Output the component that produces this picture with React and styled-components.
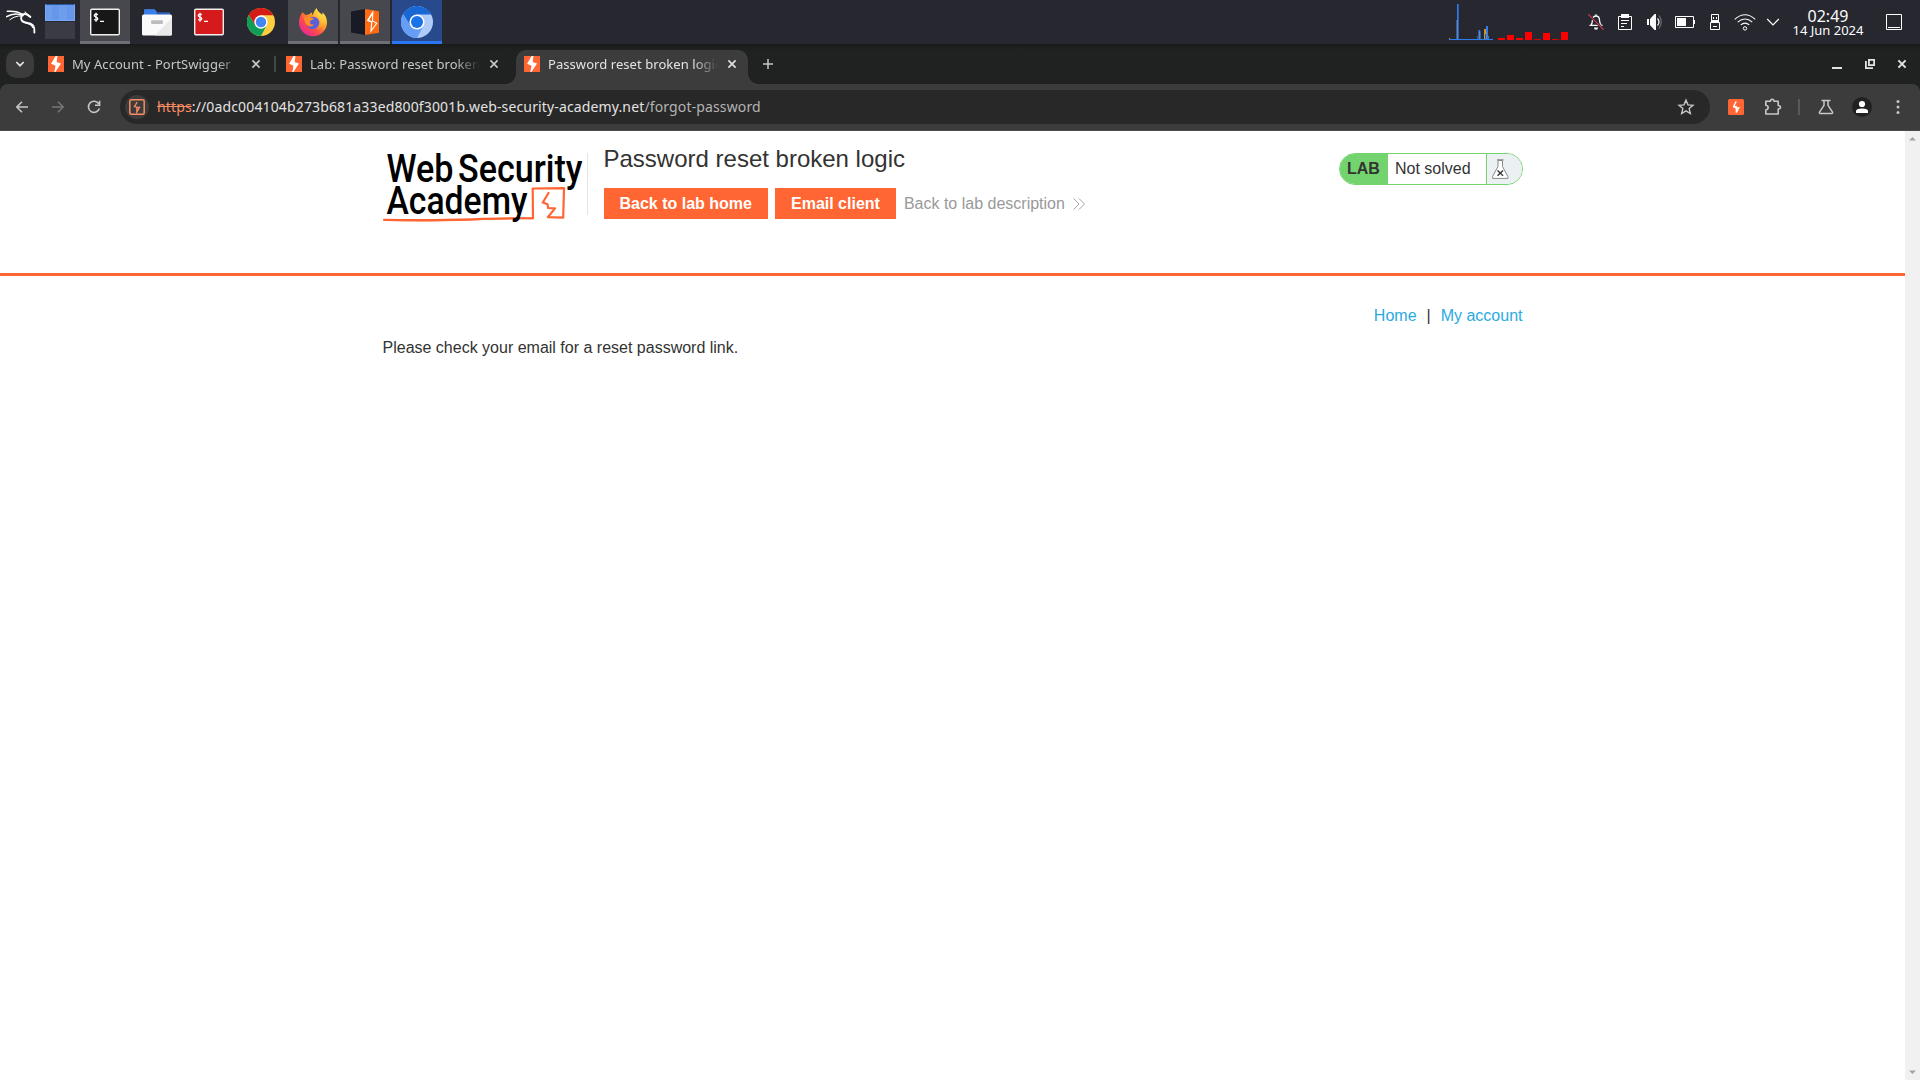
import React from "react";
import styled, { createGlobalStyle, css } from "styled-components";

const Global = createGlobalStyle`
  * { box-sizing: border-box; }
  html, body { margin: 0; padding: 0; }
  body { width: 1920px; height: 1080px; overflow: hidden; background: #fff; }
  svg { display: block; flex: none; }
`;

const ui = css`font-family: "Noto Sans", sans-serif;`;
const orange = "#ff6633";

const Screen = styled.div`
  display: flex;
  flex-direction: column;
  width: 1920px;
  height: 1080px;
  overflow: hidden;
`;

/* ---------- desktop panel ---------- */
const Panel = styled.header`
  ${ui}
  display: flex;
  flex: none;
  height: 44px;
  background: #272730;
  color: #fcfcfc;
`;
const Menu = styled.div`
  width: 45px;
  padding: 9px 0 0 6px;
`;
const Pager = styled.div`
  display: grid;
  grid-template-rows: 17px 17px;
  gap: 1px;
  width: 30px;
  margin: 4px 5px 0 0;
`;
const Desk = styled.div`
  background: ${(p) => (p.$on ? "linear-gradient(90deg, #6d9eee 0 6px, #6797ea 6px 13px, #6d9eee 13px 21px, #6797ea 21px)" : "#3b3b45")};
  border: ${(p) => (p.$on ? "1px solid #77aaff" : "0")};
  border-top-color: #265a9f;
`;
const Tasks = styled.div`
  display: flex;
  gap: 2px;
`;
const Task = styled.div`
  display: flex;
  justify-content: center;
  align-items: center;
  width: 50px;
  height: 44px;
  background: ${(p) => (p.$state === "active" ? "#284a8c" : p.$state === "open" ? "#47484d" : "transparent")};
  box-shadow: ${(p) => (p.$state === "active" ? "inset 0 -3px #2977f2" : p.$state === "open" ? "inset 0 -3px #6d7077" : "none")};
`;
const Monitor = styled.div`
  margin-left: auto;
  width: 139px;
  height: 44px;
`;
const Tray = styled.div`
  display: flex;
  align-items: center;
  height: 44px;
`;
const TrayItem = styled.div`
  display: flex;
  justify-content: center;
  width: ${(p) => p.$w}px;
`;
const Clock = styled.div`
  width: 88px;
  padding-top: 7px;
  height: 44px;
  text-align: center;
`;
const Time = styled.div`
  font-size: 16px;
  line-height: 18px;
`;
const DateText = styled.div`
  font-size: 13px;
  line-height: 11px;
  white-space: nowrap;
`;

/* ---------- browser ---------- */
const TabStrip = styled.div`
  ${ui}
  display: flex;
  flex: none;
  height: 40px;
  padding: 6px 0 0 6px;
  background: linear-gradient(#191a1a, #202221 6px);
  color: #c7c9c8;
`;
const TabSearch = styled.div`
  display: grid;
  place-items: center;
  width: 28px;
  height: 28px;
  margin-right: 6px;
  border-radius: 10px;
  background: #3c3c3c;
`;
const Tab = styled.div`
  position: relative;
  display: flex;
  align-items: center;
  width: ${(p) => p.$w}px;
  height: 34px;
  padding: 0 10px 6px 8px;
  border-radius: 10px 10px 0 0;
  background: ${(p) => (p.$active ? "#3c3c3c" : "transparent")};
  color: ${(p) => (p.$active ? "#e3e3e3" : "#c7c7c7")};
  ${(p) => p.$active && css`
    &::before, &::after {
      content: "";
      position: absolute;
      bottom: 0;
      width: 10px;
      height: 10px;
    }
    &::before { left: -10px; background: radial-gradient(circle at 0 0, transparent 9.5px, #3c3c3c 10px); }
    &::after { right: -10px; background: radial-gradient(circle at 100% 0, transparent 9.5px, #3c3c3c 10px); }
  `}
`;
const TabTitle = styled.span`
  flex: none;
  width: 170px;
  margin: 0 9px 0 8px;
  overflow: hidden;
  white-space: nowrap;
  font-size: 13px;
  letter-spacing: 0.06px;
  line-height: 20px;
  mask-image: linear-gradient(90deg, #000 145px, transparent 170px);
`;
const TabRule = styled.div`
  width: 2px;
  height: 16px;
  margin: 6px 2px 0 0;
  background: #454746;
`;
const NewTab = styled.div`
  padding: 9px 0 0 15px;
`;
const WindowControls = styled.div`
  display: flex;
  gap: 22.5px;
  margin-left: auto;
  padding: 9px 13px 0 0;
`;
const ToolbarBack = styled.div`
  flex: none;
  background: #202221;
`;
const Toolbar = styled.div`
  ${ui}
  display: flex;
  align-items: center;
  height: 47px;
  padding: 0 12px 1px;
  border-radius: 8px 8px 0 0;
  border-bottom: 1px solid #4b4b4b;
  background: #3c3c3c;
`;
const NavButtons = styled.div`
  display: flex;
  gap: 16px;
  width: 108px;
`;
const Omnibox = styled.div`
  display: flex;
  align-items: center;
  width: 1590px;
  height: 34px;
  padding: 0 14px 0 5px;
  border-radius: 17px;
  background: #282828;
`;
const SiteChip = styled.div`
  display: grid;
  place-items: center;
  width: 24px;
  height: 24px;
  margin-right: 8px;
  border-radius: 50%;
  background: #3c3c3c;
`;
const Url = styled.span`
  flex: 1;
  font-size: 14px;
  letter-spacing: 0.138px;
  color: #e3e3e3;
  white-space: nowrap;
`;
const Scheme = styled.span`
  color: #fa8b62;
  text-decoration: line-through;
`;
const Path = styled.span`
  color: #b4b4b4;
`;
const Extensions = styled.div`
  display: flex;
  align-items: center;
  padding-left: 18px;
`;
const Puzzle = styled.svg`
  margin-left: 20px;
`;
const ExtRule = styled.div`
  width: 2px;
  height: 16px;
  margin: 0 18px 0 16px;
  background: #5a5a5a;
`;
const Avatar = styled.div`
  display: grid;
  place-items: center;
  width: 20px;
  height: 20px;
  margin: 0 24px 0 18px;
  border-radius: 50%;
  background: #202221;
`;

/* ---------- page ---------- */
const Viewport = styled.main`
  display: flex;
  flex: 1;
  font-family: "Liberation Sans", Arial, sans-serif;
  font-size: 16px;
  color: #333332;
  background: #fff;
`;
const Document = styled.div`
  flex: 1;
`;
const Scrollbar = styled.div`
  display: flex;
  flex-direction: column;
  justify-content: space-between;
  width: 15px;
  padding: 5px 4px;
  background: #f1f1f1;
`;
const LabHeader = styled.section`
  height: 145px;
  border-bottom: 3px solid ${orange};
`;
const Container = styled.div`
  display: flex;
  width: 1140px;
  margin: 0 auto;
`;
const LogoBox = styled.div`
  width: 205px;
  height: 62px;
  margin: 22px 16px 0 0;
  border-right: 1px solid #e3e3e3;
`;
const TitleBlock = styled.div`
  flex: 1;
  padding-top: 14px;
`;
const Title = styled.h2`
  margin: 0;
  font-size: 24px;
  font-weight: 400;
  line-height: 28px;
`;
const Actions = styled.div`
  display: flex;
  align-items: center;
  margin-top: 15px;
`;
const Button = styled.a`
  height: 31px;
  margin-right: 7px;
  padding: 0 16px;
  background: ${orange};
  color: #fff;
  font-weight: 700;
  line-height: 31px;
`;
const BackLink = styled.a`
  display: flex;
  align-items: center;
  gap: 8px;
  margin-left: 1px;
  color: #999;
  line-height: 31px;
`;
const Status = styled.div`
  display: flex;
  width: 184px;
  height: 32px;
  margin-top: 22px;
  overflow: hidden;
  border: 1px solid #73d46f;
  border-radius: 16px;
  line-height: 30px;
`;
const StatusLab = styled.span`
  width: 48px;
  padding-left: 7.5px;
  background: #73d46f;
  font-weight: 700;
`;
const StatusText = styled.span`
  width: 99px;
  padding-left: 7.5px;
  border-right: 1px solid #73d46f;
`;
const StatusIcon = styled.span`
  flex: 1;
  padding: 5px 0 0 5px;
  background: #ebf0f3;
`;
const SiteNav = styled.nav`
  display: flex;
  justify-content: flex-end;
  gap: 10px;
  width: 1140px;
  margin: 31px auto 0;
  line-height: 18px;
`;
const NavLink = styled.a`
  color: #29abe2;
`;
const Message = styled.p`
  width: 1140px;
  margin: 14px auto 0;
  line-height: 18px;
`;

/* ---------- drawings ---------- */
const Bolt = ({ rounded }) => (
  <svg width="16" height="16" viewBox="0 0 16 16">
    <rect width="16" height="16" rx={rounded ? 1.5 : 0} fill={orange} />
    {rounded ? (
      <path d="M8.2 2.4 5.7 7.1 8.4 7.8V9h2.4L8.3 13.6V9.1L5.2 7.7" stroke="#fff" strokeWidth="1.3" fill="none" />
    ) : (
      <path d="M7.600 0H9.400L8.700 5.900 13 7.400 7.400 16H6.300L7.500 9.700 3.100 7.800Z" fill="#fff" />
    )}
  </svg>
);

const Cross = ({ c = "#c7c7c7", w = 1.6 }) => (
  <svg width="10" height="10" viewBox="0 0 10 10"><path d="m1.4 1.4 7.2 7.2m0-7.2-7.2 7.2" stroke={c} strokeWidth={w} /></svg>
);

const Kali = () => (
  <svg width="30" height="25" viewBox="0 0 30 25" fill="none" stroke="#fff" strokeLinecap="round">
    <path d="M1.300 2.300C6 2 12 2.300 16.500 5.500" strokeWidth="1.500" />
    <path d="M.6 7.600C5 5 11 4 17 6.500" strokeWidth="1.600" />
    <path d="M3.800 10.800C6.600 8.500 10.600 6.700 16 6.800" strokeWidth="1" />
    <path d="M15.900 6.500c-1.500 2.500-.9 5.500 1.900 6.500 3.800 1.400 7.600 1 9.500 3.800.9 1.400 1.300 3.500 1.100 6.700" strokeWidth="1.900" />
    <path d="M20 14.200c4 .3 5.700 1.800 6.800 4.400" strokeWidth="1.200" />
    <path d="M15.600 5.700c2.600-1 4.400-.9 5.700 0l3 2.200" strokeWidth="2.100" />
    <path d="m21 5.200-2-2.200" strokeWidth="1.100" />
  </svg>
);

const Terminal = ({ bg }) => (
  <svg width="30" height="28" viewBox="0 0 30 28">
    <rect x=".7" y="1.2" width="28.6" height="25.6" rx="1.3" fill={bg} stroke="#f1eeee" strokeWidth="1.4" />
    <path d="M7.800 6.700C6 5.500 4.300 6 4.300 7.500c0 2 3.500 1.200 3.500 3.200 0 1.600-2 1.900-3.700.8M6 4.800v9M10 13.300h4" stroke="#fff" strokeWidth="1.300" fill="none" />
  </svg>
);

const Files = () => (
  <svg width="30" height="28" viewBox="0 0 30 28">
    <path d="M2 2.5Q2 1.2 3.3 1.2H12.500L15 4.200H27Q28.300 4.200 28.300 5.500V10H2Z" fill="#2b5fb8" />
    <path d="M2 2.5Q2 1.2 3.3 1.2H12.500L14.500 3.600V8H2Z" fill="#3b7de8" />
    <rect y="6.600" width="30" height="21" rx="1.500" fill="#fafafa" />
    <path d="M30 10 12.800 27.600H28.500q1.500 0 1.500-1.500Z" fill="#e9e9e9" />
    <rect x="9" y="12.300" width="12" height="3.600" rx="1.200" fill="#bdbdbd" />
  </svg>
);

const Chrome = ({ size, a, b, c, core }) => (
  <svg width={size} height={size} viewBox="0 0 48 48">
    <circle cx="24" cy="24" r="24" fill={c} />
    <path d="M3.200 12A24 24 0 0 0 24 48L33.600 29.500 24 24 14.400 29.500Z" fill={b} />
    <path d="M24 12.600H45.100L44.800 12A24 24 0 0 0 3.200 12L14.400 29.500Z" fill={a} />
    <circle cx="24" cy="24" r="11.400" fill="#fff" />
    <circle cx="24" cy="24" r="9" fill={core} />
  </svg>
);

const Firefox = () => (
  <svg width="30" height="30" viewBox="0 0 30 30">
    <defs>
      <linearGradient id="fxa" x1=".85" y1=".1" x2=".15" y2=".9">
        <stop offset="0" stopColor="#fff04f" /><stop offset=".35" stopColor="#ffa12b" />
        <stop offset=".65" stopColor="#ff4b45" /><stop offset="1" stopColor="#e6289a" />
      </linearGradient>
      <linearGradient id="fxb" x1="1" y1="0" x2=".4" y2="1">
        <stop offset="0" stopColor="#ffe84a" /><stop offset="1" stopColor="#ff9e2e" stopOpacity=".2" />
      </linearGradient>
    </defs>
    <path d="M4.500 5.200 7.500 8q1.800-.8 3.600-.5 1.200-1.500 3-2l-.3 3.200C16 6.200 16 3 18.800 1c.2 3.400 4 5 5.400 7l.3-2.600C27.500 8 29 11.500 29 15.500A14 13.700 0 0 1 1 15.500C1 11.500 2.300 8 4.500 5.200Z" fill="url(#fxa)" />
    <circle cx="15" cy="16" r="6.300" fill="#5b5fd8" />
    <path d="M14.500 9.800c5-1.800 8.600 2 7 6.700-1 3.200-4 5-7 4.600 5 3 10.700 0 11.200-6 .4-4-1.600-7.200-6.200-9.600Z" fill="url(#fxb)" />
    <path d="M5.500 10.500c2-1 5-1.500 6.200-.6 1 .8 2.700 1 4 1.200-.4 2-3 2-3.700 3.300-.5 2 1.500 3.600 4 3-1 2-4 2.500-6 1.400-2-1-3.500-4-4.500-8.300Z" fill="#ff8a2b" />
  </svg>
);

const Burp = () => (
  <svg width="30" height="28" viewBox="0 0 30 28">
    <path d="M1 3.500 15 1V27L1 24.500Z" fill="#181b25" />
    <path d="M15 1 29 3.200V24.800L15 27Z" fill="#ff6a13" />
    <path d="M22.800 4.300 17.700 12.500 21.800 14 21 23 26.700 15.200 22.500 13Z" stroke="#fff" strokeWidth="1.100" fill="none" />
    <path d="M22.600 5 18 12.400 22 13.900" stroke="#fff" strokeWidth="1.500" fill="none" />
  </svg>
);

const loads = [2, 5, 2, 8, 1, 7, 1, 8];
const Graphs = () => (
  <svg width="139" height="44" viewBox="0 0 139 44" shapeRendering="crispEdges">
    <path d="M0 38h1v2H0zM35 29h2v10h-2z" fill="#d49217" />
    <path d="M0 39h44v1H0zM8 4h1v36H8zM30 30h1v9h-1zM37 26h2v13h-2zM39 36h1v3h-1z" fill="#2e7df0" />
    <path d="M7 20h1v19H7zM9 4h1v35H9zM28 36h1v3h-1zM29 30h1v9h-1zM31 31h1v8h-1zM36 34h1v5h-1z" fill="#2b5da8" />
    <path d="M8 20h1v19H8zM30 32h1v7h-1zM37 32h1v7h-1z" fill="#6688b8" />
    {loads.map((h, i) => <rect key={i} x={49 + i * 9} y={40 - h} width="7" height={h} fill={h === 1 ? "#d50000" : "#ff0000"} />)}
  </svg>
);

const White = { fill: "none", stroke: "#fcfcfc" };
const Bell = () => (
  <svg width="16" height="18" viewBox="0 0 16 18" {...White}>
    <path d="M1.500 12.300h13M3 12c1.600-1.600 1.200-4.500 1.800-6.600C5.400 3.600 6.500 3 8 3s2.700.6 3.200 2.400c.6 2.100.2 5 1.800 6.600M8 1.200V3" strokeWidth="1.300" />
    <path d="M6 14.500h4q0 2.300-2 2.300T6 14.500Z" fill="#fcfcfc" stroke="none" />
    <path d="m.3 1.300 15.400 15.400" stroke="#272730" strokeWidth="2.600" />
    <path d="m.3 1.300 15.400 15.400" stroke="#d04255" strokeWidth="1.200" />
  </svg>
);
const Clipboard = () => (
  <svg width="14" height="16" viewBox="0 0 14 16" {...White}>
    <path d="M.5 2.500h13v13H.5Z" /><path d="M3 0h8v4H3Z" fill="#fcfcfc" stroke="none" />
    <path d="M3 6.500h8M3 9.500h6M3 12.500h3" />
  </svg>
);
const Speaker = () => (
  <svg width="17" height="16" viewBox="0 0 17 16" {...White}>
    <path d="M0 5h2v6H0ZM3 5 7.500 0H9v16H7.500L3 11Z" fill="#fcfcfc" stroke="none" />
    <path d="M10.500 4.500q3 3.500 0 7" strokeWidth="1.200" /><path d="M12 1.500q4.500 6.500 0 13" stroke="#6e6e75" strokeWidth="1.200" />
  </svg>
);
const Battery = () => (
  <svg width="20" height="12" viewBox="0 0 20 12" {...White}>
    <path d="M.5.5h18v11H.5Z" /><path d="M2 2h9v8H2ZM19 4h1v4h-1Z" fill="#fcfcfc" stroke="none" />
  </svg>
);
const Usb = () => (
  <svg width="10" height="16" viewBox="0 0 10 16" {...White}>
    <path d="M1.500 8V.5h7V8M.5 8.500h9v7h-9ZM3 12.500h4" /><path d="M2 6h6v2H2ZM3 3h1v2H3ZM6 3h1v2H6Z" fill="#fcfcfc" stroke="none" />
  </svg>
);
const Wifi = () => (
  <svg width="22" height="17" viewBox="0 0 22 17" {...White}>
    <circle cx="11" cy="14.400" r="1.700" /><path d="M.7 5.300Q11-3.800 21.300 5.300M3.700 8.100q7.300-6.300 14.600 0M6.700 10.900q4.300-3.500 8.600 0" strokeWidth="1.100" />
  </svg>
);

const Logo = () => (
  <svg width="204" height="72" viewBox="0 0 204 72" overflow="visible">
    <g fill="none" stroke={orange} strokeLinejoin="round" strokeLinecap="round">
      <path d="M1 66.800Q50 67.600 90 66.300T150 65.300L149.700 35.500 181 35.200 180.200 64.600 164.800 64.200 172 55.400 165.200 55 164.500 51.200 159.800 49.500 165.500 40" strokeWidth="2.200" />
      <path d="M8 67.300Q60 68.500 110 65.800L150 65.200" strokeWidth="1.500" />
    </g>
    <g fill="#000" fontFamily="Roboto, sans-serif" fontWeight="500" fontSize="38.500">
      <text x="3.500" y="28.500" textLength="67" lengthAdjust="spacingAndGlyphs">Web</text>
      <text x="75" y="28.500" textLength="124.500" lengthAdjust="spacingAndGlyphs">Security</text>
      <text x="3.500" y="61" textLength="141" lengthAdjust="spacingAndGlyphs">Academy</text>
    </g>
  </svg>
);

const Flask = ({ c = "#c7c7c7" }) => (
  <svg width="16" height="16" viewBox="0 0 16 16" fill="none" stroke={c} strokeWidth="1.500">
    <path d="M3.500 1.500h9M6 1.500V6.300L1.500 13.200q-.5 1.200.8 1.200h11.400q1.300 0 .8-1.200L10 6.300V1.500" />
  </svg>
);

export default function App() {
  return (
    <Screen>
      <Global />
      <Panel>
        <Menu><Kali /></Menu>
        <Pager><Desk $on /><Desk /></Pager>
        <Tasks>
          <Task $state="open"><Terminal bg="#171717" /></Task>
          <Task><Files /></Task>
          <Task><Terminal bg="#d41a1a" /></Task>
          <Task><Chrome size={28} a="#d31b18" b="#109d58" c="#ffcd40" core="#4285f4" /></Task>
          <Task $state="open"><Firefox /></Task>
          <Task $state="open"><Burp /></Task>
          <Task $state="active"><Chrome size={32} a="#1967d2" b="#669df6" c="#aecbfa" core="#1a73e8" /></Task>
        </Tasks>
        <Monitor><Graphs /></Monitor>
        <Tray>
          <TrayItem $w={16}><Bell /></TrayItem>
          <TrayItem $w={42}><Clipboard /></TrayItem>
          <TrayItem $w={19}><Speaker /></TrayItem>
          <TrayItem $w={40}><Battery /></TrayItem>
          <TrayItem $w={20}><Usb /></TrayItem>
          <TrayItem $w={40}><Wifi /></TrayItem>
          <TrayItem $w={16}>
            <svg width="14" height="8" viewBox="0 0 14 8" {...White}><path d="m1.200 1 5.800 5.800L12.800 1" strokeWidth="1.200" /></svg>
          </TrayItem>
          <TrayItem $w={3} />
          <Clock><Time>02:49</Time><DateText>14 Jun 2024</DateText></Clock>
          <TrayItem $w={44}>
            <svg width="16" height="16" viewBox="0 0 16 16" {...White}><path d="M.5.500h15v15H.5ZM2 13.500h12" /></svg>
          </TrayItem>
          <TrayItem $w={4} />
        </Tray>
      </Panel>

      <TabStrip>
        <TabSearch>
          <svg width="10" height="10" viewBox="0 0 10 10"><path d="m1.300 3 3.700 3.700L8.700 3" stroke="#e3e3e3" strokeWidth="1.700" fill="none" /></svg>
        </TabSearch>
        <Tab $w={234}><Bolt /><TabTitle>My Account - PortSwigger</TabTitle><Cross /></Tab>
        <TabRule />
        <Tab $w={238}><Bolt /><TabTitle>Lab: Password reset broken logic</TabTitle><Cross /></Tab>
        <Tab $w={232} $active><Bolt /><TabTitle>Password reset broken logic</TabTitle><Cross c="#e3e3e3" /></Tab>
        <NewTab>
          <svg width="10" height="10" viewBox="0 0 10 10"><path d="M5 0v10M0 5h10" stroke="#c7c7c7" strokeWidth="1.500" /></svg>
        </NewTab>
        <WindowControls>
          <svg width="10" height="10" viewBox="0 0 10 10"><path d="M0 8h10v2H0Z" fill="#e3e3e3" /></svg>
          <svg width="10" height="10" viewBox="0 0 10 10" fill="none" stroke="#e3e3e3" strokeWidth="1.800"><path d="M3.900.9h5.200v5.200H3.900ZM.9 2v7.100H8" /></svg>
          <Cross c="#e3e3e3" w={2} />
        </WindowControls>
      </TabStrip>

      <ToolbarBack>
        <Toolbar>
          <NavButtons>
            <svg width="20" height="20" viewBox="0 0 20 20" fill="none" stroke="#c7c7c7" strokeWidth="1.600"><path d="M16 10H5M10 4.800 4.800 10l5.200 5.200" /></svg>
            <svg width="20" height="20" viewBox="0 0 20 20" fill="none" stroke="#757575" strokeWidth="1.600"><path d="M4 10h11M10 4.800 15.200 10 10 15.200" /></svg>
            <svg width="20" height="20" viewBox="0 0 20 20" fill="none" stroke="#c7c7c7" strokeWidth="1.600"><path d="M14.800 6.800A5.600 5.600 0 1 0 15.400 11.500M15.600 3.800V8.300H11" /></svg>
          </NavButtons>
          <Omnibox>
            <SiteChip>
              <svg width="16" height="16" viewBox="0 0 16 16" fill="none" stroke="#fa8b62">
                <rect x=".8" y=".8" width="14.400" height="14.400" rx="1.500" strokeWidth="1.500" />
                <path d="M8.200 3.200 5.400 7.600 8.500 8.400H10.500L7.800 13V8.300" strokeWidth="1.300" />
              </svg>
            </SiteChip>
            <Url><Scheme>https</Scheme>://0adc004104b273b681a33ed800f3001b.web-security-academy.net<Path>/forgot-password</Path></Url>
            <svg width="20" height="20" viewBox="0 0 24 24"><path d="m12 3.800 2.400 5.600 6 .5-4.600 4 1.400 5.900L12 16.700l-5.200 3.100 1.400-5.900-4.600-4 6-.5Z" fill="none" stroke="#c7c7c7" strokeWidth="1.700" /></svg>
          </Omnibox>
          <Extensions>
            <Bolt rounded />
            <Puzzle width="18" height="18" viewBox="0 0 18 18" fill="none" stroke="#c7c7c7" strokeWidth="1.600">
              <path d="M1.800 3.300H6.500Q6.500 1.300 8.200 1.300T10 3.300H14.200V7.500Q16.500 7.700 16.500 9.200T14.200 11V16H1.800V12Q4.200 11.500 4.200 9.600T1.800 7.200Z" strokeLinejoin="round" />
            </Puzzle>
            <ExtRule />
            <Flask />
            <Avatar>
              <svg width="14" height="14" viewBox="0 0 14 14" fill="#fff"><circle cx="7" cy="4" r="3.100" /><path d="M1 13V11Q1 8.500 7 8.500T13 11V13Z" /></svg>
            </Avatar>
            <svg width="4" height="16" viewBox="0 0 4 16" fill="#c7c7c7"><circle cx="2" cy="2.500" r="1.500" /><circle cx="2" cy="8" r="1.500" /><circle cx="2" cy="13.500" r="1.500" /></svg>
          </Extensions>
        </Toolbar>
      </ToolbarBack>

      <Viewport>
        <Document>
          <LabHeader>
            <Container>
              <LogoBox><Logo /></LogoBox>
              <TitleBlock>
                <Title>Password reset broken logic</Title>
                <Actions>
                  <Button>Back to lab home</Button>
                  <Button>Email client</Button>
                  <BackLink>
                    Back to lab description
                    <svg width="12" height="12" viewBox="0 0 12 12" fill="none" stroke="#999" strokeWidth=".9"><path d="m.5.500 5.500 5.500-5.500 5.500M6 .5 11.500 6 6 11.500" /></svg>
                  </BackLink>
                </Actions>
              </TitleBlock>
              <Status>
                <StatusLab>LAB</StatusLab>
                <StatusText>Not solved</StatusText>
                <StatusIcon>
                  <svg width="17" height="20" viewBox="0 0 17 20" stroke="#888" fill="#fff">
                    <path d="M6 1.500V7.500L.6 17.500V19.400H15.900V17.500L10.500 7.500V1.500Z" strokeWidth="1" /><path d="M5 .9h6.500" strokeWidth="1.300" />
                    <path d="m5.500 11.500 5.600 5.200m0-5.200-5.600 5.200" stroke="#333" strokeWidth="1.300" />
                  </svg>
                </StatusIcon>
              </Status>
            </Container>
          </LabHeader>
          <SiteNav><NavLink>Home</NavLink><span>|</span><NavLink>My account</NavLink></SiteNav>
          <Message>Please check your email for a reset password link.</Message>
        </Document>
        <Scrollbar>
          <svg width="7" height="5" viewBox="0 0 7 5"><path d="M0 4.500 3.500 1 7 4.500Z" fill="#a3a3a3" /></svg>
          <svg width="7" height="5" viewBox="0 0 7 5"><path d="M0 .5 3.500 4 7 .5Z" fill="#a3a3a3" /></svg>
        </Scrollbar>
      </Viewport>
    </Screen>
  );
}
